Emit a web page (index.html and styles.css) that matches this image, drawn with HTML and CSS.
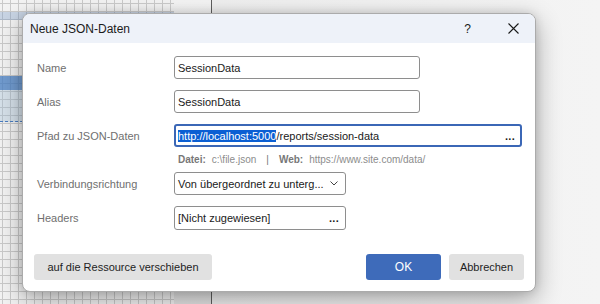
FILE: index.html
```html
<!DOCTYPE html>
<html lang="de">
<head>
<meta charset="UTF-8" />
<title>Neue JSON-Daten</title>
<link rel="stylesheet" href="styles.css">
</head>
<body>
<div class="backdrop">
  <div class="grid">
    <div class="band" style="height:12px"></div>
    <div class="band band-tint" style="height:8px"></div>
    <div class="band" style="height:56px"></div>
    <div class="band band-sel" style="height:14px"></div>
    <div class="band band-light" style="height:32px"></div>
  </div>
  <div class="strip"></div>
  <div class="canvas"></div>
</div>

<div class="dialog">
  <div class="titlebar">
    <span class="title">Neue JSON-Daten</span>
    <span class="help">?</span>
    <svg class="close" width="11" height="11" viewBox="0 0 11 11">
      <path d="M0.5 0.5 L10.5 10.5 M10.5 0.5 L0.5 10.5" stroke="#1a1a1a" stroke-width="1.1" fill="none"/>
    </svg>
  </div>

  <div class="body">
    <div class="row">
      <label>Name</label>
      <div class="field w-mid"><span>SessionData</span></div>
    </div>
    <div class="row">
      <label>Alias</label>
      <div class="field w-mid"><span>SessionData</span></div>
    </div>
    <div class="row row-path">
      <label>Pfad zu JSON-Daten</label>
      <div class="field field-active w-wide">
        <span><span class="sel">http://localhost:5000</span>/reports/session-data</span>
        <span class="dots">...</span>
      </div>
    </div>
    <div class="hint">
      <b>Datei:</b><span>c:\file.json</span><span class="sep">|</span><b>Web:</b><span>https://www.site.com/data/</span>
    </div>
    <div class="row">
      <label>Verbindungsrichtung</label>
      <div class="field w-small">
        <span>Von übergeordnet zu unterg...</span>
        <svg class="chevron" width="8" height="5" viewBox="0 0 8 5">
          <path d="M0.5 0.5 L4 4 L7.5 0.5" stroke="#444" stroke-width="1" fill="none"/>
        </svg>
      </div>
    </div>
    <div class="row row-headers">
      <label>Headers</label>
      <div class="field w-small">
        <span>[Nicht zugewiesen]</span>
        <span class="dots">...</span>
      </div>
    </div>

    <div class="footer">
      <button class="btn">auf die Ressource verschieben</button>
      <button class="btn btn-primary">OK</button>
      <button class="btn">Abbrechen</button>
    </div>
  </div>
</div>
</body>
</html>
```

FILE: styles.css
```css
* {
  box-sizing: border-box;
}
body {
  margin: 0;
  width: 600px;
  height: 304px;
  overflow: hidden;
  position: relative;
  font-family: "Liberation Sans", Arial, sans-serif;
  background: #f1f1f1;
}

/* designer surface behind the dialog */
.backdrop {
  display: flex;
  height: 304px;
}
.grid {
  width: 174px;
  display: flex;
  flex-direction: column;
  background-color: #f3f3f3;
  background-image:
    linear-gradient(to right, #cacaca 1px, transparent 1px),
    linear-gradient(to bottom, #cacaca 1px, transparent 1px);
  background-size: 8px 8px;
  background-position: 2px 3px;
}
.band-tint {
  background: rgba(120, 155, 200, 0.35);
}
.band-sel {
  background: rgba(70, 125, 195, 0.75);
}
.band-light {
  background: rgba(150, 185, 215, 0.3);
  border-bottom: 1px dashed #4a7cc0;
}
.strip {
  width: 38px;
  background: linear-gradient(to bottom, #f4f4f4, #e4e4e4);
  border-right: 1px solid #5e5e5e;
}
.canvas {
  flex: 1;
  background: linear-gradient(to right, #efefef, #f4f4f4);
}

/* dialog window */
.dialog {
  position: absolute;
  left: 22px;
  top: 13px;
  width: 514px;
  height: 279px;
  background: #fff;
  border: 1px solid #ababab;
  border-radius: 8px;
  overflow: hidden;
  display: flex;
  flex-direction: column;
  box-shadow: 0 8px 26px rgba(0, 0, 0, 0.32), 0 0 10px rgba(0, 0, 0, 0.12);
}
.titlebar {
  height: 29px;
  background: #eef2f9;
  display: flex;
  align-items: center;
  padding: 0 0 0 7px;
  flex-shrink: 0;
}
.title {
  font-size: 12px;
  color: #1b1b1b;
  flex: 1;
}
.help {
  font-size: 12px;
  color: #1b1b1b;
  margin-right: 37px;
}
.close {
  margin-right: 16px;
}

.body {
  flex: 1;
  display: flex;
  flex-direction: column;
  padding: 13px 11px 11px 14px;
}
.row {
  display: flex;
  align-items: center;
  height: 23px;
  margin-bottom: 11px;
}
.row-path {
  margin-bottom: 0;
}
.row-headers {
  height: 24px;
  margin-bottom: 0;
}
.row label {
  width: 137px;
  font-size: 11px;
  color: #6f6f6f;
}
.field {
  height: 100%;
  border: 1px solid #8e8e8e;
  border-radius: 3px;
  font-size: 11px;
  color: #1a1a1a;
  display: flex;
  align-items: center;
  padding: 0 3px;
  white-space: nowrap;
}
.field-active {
  border: 2px solid #3b67b6;
  padding: 0 2px;
}
.w-mid {
  width: 246px;
}
.w-wide {
  width: 348px;
}
.w-small {
  width: 172px;
}
.sel {
  background: #0b5fd3;
  color: #fff;
}
.dots {
  margin-left: auto;
  font-weight: bold;
  font-size: 11px;
  padding-right: 3px;
  letter-spacing: 0.3px;
}
.chevron {
  margin-left: auto;
  margin-right: 4px;
}
.hint {
  height: 25px;
  padding-left: 141px;
  font-size: 10px;
  color: #8c8c8c;
  display: flex;
  align-items: center;
  gap: 6px;
  white-space: nowrap;
}
.hint b {
  color: #777;
}
.hint .sep {
  margin: 0 4px;
  color: #777;
}

.footer {
  margin-top: auto;
  display: flex;
  gap: 8px;
  margin-left: -3px;
}
.btn {
  height: 26px;
  border: none;
  border-radius: 3px;
  background: #e1e1e1;
  font-family: "Liberation Sans", Arial, sans-serif;
  font-size: 11px;
  color: #1e1e1e;
  padding: 0 8px;
}
.btn:first-child {
  width: 178px;
}
.btn-primary {
  margin-left: auto;
  width: 75px;
  background: #3e6bba;
  color: #fff;
  font-size: 12px;
}
.btn-primary + .btn {
  width: 75px;
}
```
